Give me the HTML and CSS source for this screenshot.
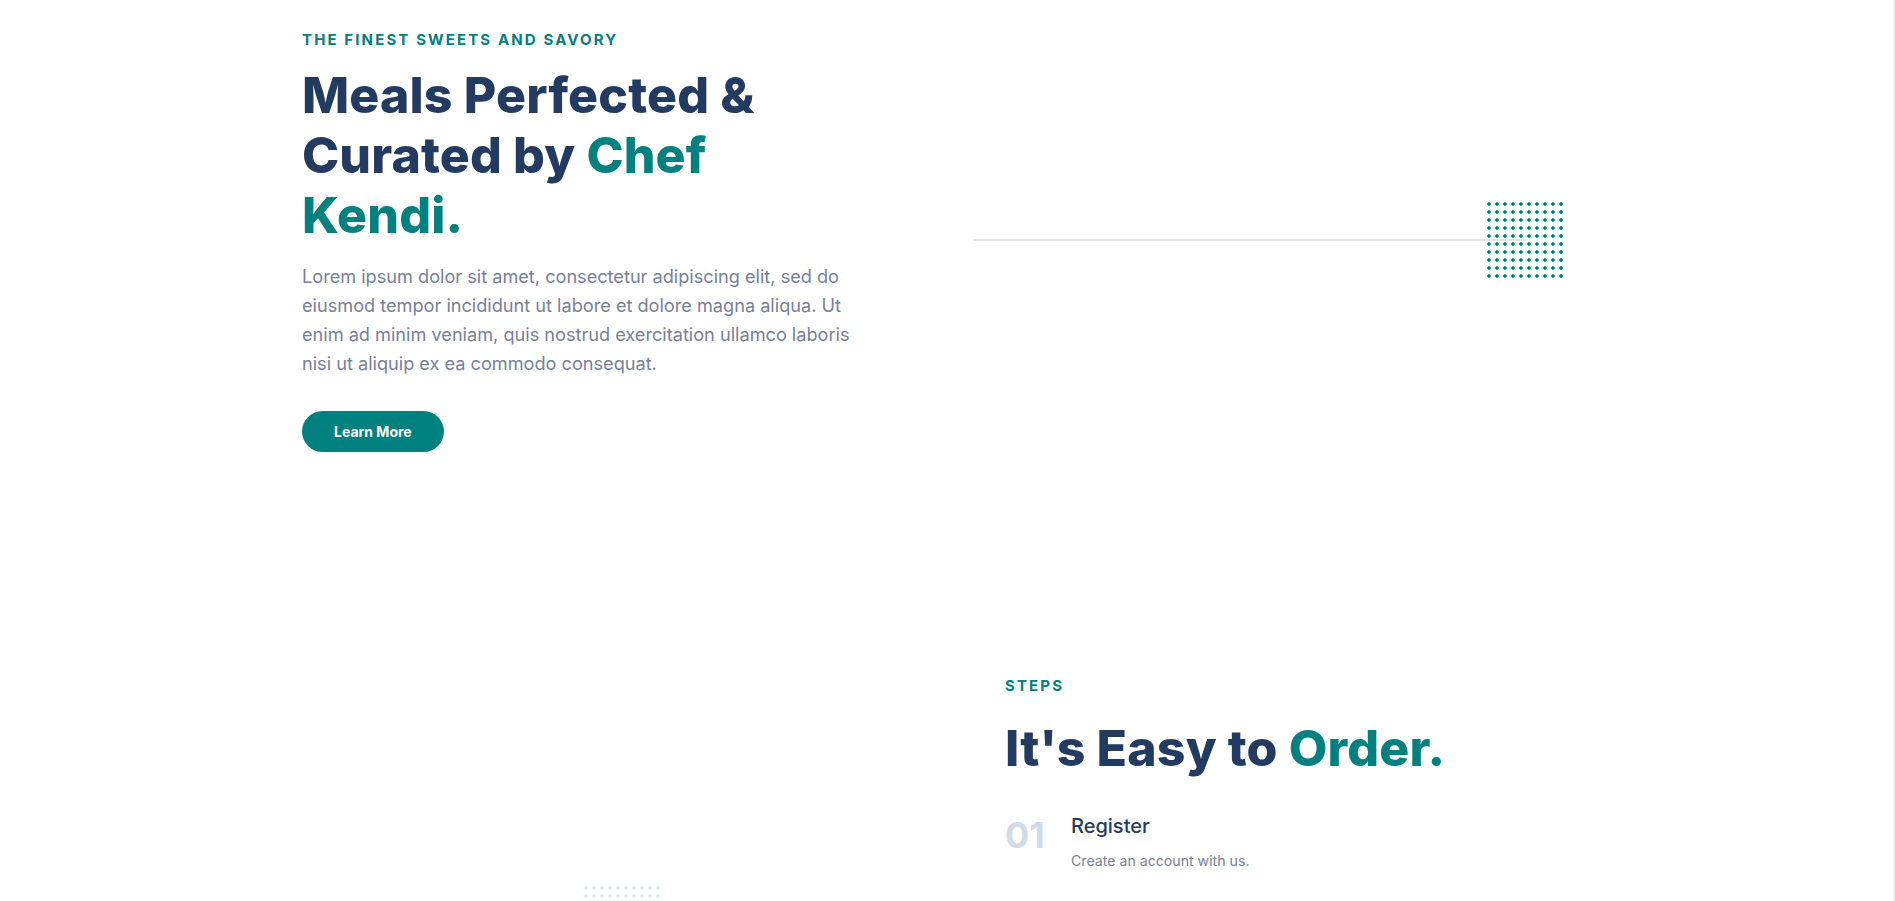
FILE: index.html
```html
<!DOCTYPE html>
<html lang="en">
<head>
<meta charset="utf-8">
<title>Chef Kendi</title>
<link rel="stylesheet" href="styles.css">
</head>
<body>
<div class="page">
  <section class="hero container">
    <div class="hero-text">
      <p class="eyebrow">THE FINEST SWEETS AND SAVORY</p>
      <h1 class="title">Meals Perfected &amp; Curated by <span class="accent">Chef Kendi.</span></h1>
      <p class="lead">Lorem ipsum dolor sit amet, consectetur adipiscing elit, sed do eiusmod tempor incididunt ut labore et dolore magna aliqua. Ut enim ad minim veniam, quis nostrud exercitation ullamco laboris nisi ut aliquip ex ea commodo consequat.</p>
      <a class="btn" href="#">Learn More</a>
    </div>
    <div class="hero-media">
      <div class="hero-art">
        <div class="hero-line"></div>
        <div class="dots dots-strong"></div>
      </div>
    </div>
  </section>

  <section class="steps container">
    <div class="steps-media">
      <div class="dots dots-soft"></div>
    </div>
    <div class="steps-text">
      <p class="eyebrow">STEPS</p>
      <h2 class="title title-steps">It's Easy to <span class="accent">Order.</span></h2>
      <div class="step">
        <div class="step-num">01</div>
        <div class="step-body">
          <h3 class="step-title">Register</h3>
          <p class="step-desc">Create an account with us.</p>
        </div>
      </div>
    </div>
  </section>
</div>
</body>
</html>
```

FILE: styles.css
```css
* { box-sizing: border-box; }

html, body {
  margin: 0;
  padding: 0;
  background: #ffffff;
}

body {
  font-family: Inter, "Noto Sans", sans-serif;
  overflow: hidden;
}

.page {
  min-height: 100vh;
  border-right: 2px solid #efefef;
}

.container {
  width: 1296px;
  margin: 0 auto;
  display: grid;
  grid-template-columns: 1fr 1fr;
  column-gap: 24px;
}

.eyebrow {
  margin: 0;
  font-size: 15px;
  line-height: 24px;
  font-weight: 700;
  letter-spacing: 2.12px;
  color: #00807f;
}

.title {
  margin: 0;
  font-size: 50px;
  line-height: 60px;
  font-weight: 800;
  letter-spacing: 0.15px;
  color: #243b61;
}

.accent { color: #00807f; }

/* HERO */
.hero {
  padding-top: 27.5px;
}

.hero-text {
  max-width: 564px;
  padding-left: 3.5px;
  display: flex;
  flex-direction: column;
  align-items: flex-start;
}

.hero-text .title {
  margin-top: 13px;
}

.lead {
  margin: 17px 0 0;
  font-size: 18.15px;
  line-height: 29px;
  color: #76809b;
}

.btn {
  margin-top: 33.5px;
  display: inline-flex;
  align-items: center;
  height: 41px;
  padding: 0 32px;
  border-radius: 21px;
  background: #00807f;
  color: #ffffff;
  font-size: 14px;
  font-weight: 700;
  text-decoration: none;
}

.hero-media {
  display: flex;
  align-items: center;
  padding-left: 14.5px;
}

.hero-art {
  position: relative;
  width: 592px;
  height: 80px;
  display: flex;
  align-items: center;
}

.hero-line {
  width: 553px;
  height: 2px;
  background: #e4e4ea;
}

.dots {
  width: 80px;
  height: 80px;
  background-size: 8px 8px;
}

.dots-strong {
  position: absolute;
  right: 0;
  top: 0;
  background-image: radial-gradient(circle at 4px 4px, #00807f 1.5px, transparent 1.9px);
}

/* STEPS */
.steps {
  margin-top: 222px;
}

.steps-media {
  position: relative;
}

.dots-soft {
  position: absolute;
  left: 283.5px;
  top: 210px;
  background-image: radial-gradient(circle at 4px 4px, #d6ecec 1.5px, transparent 1.9px);
}

.steps-text {
  padding-left: 46.5px;
}

.title-steps {
  margin-top: 20px;
}

.step {
  margin-top: 34px;
  display: flex;
  align-items: flex-start;
}

.step-num {
  flex: 0 0 66px;
  margin-top: 5px;
  font-size: 36px;
  line-height: 36px;
  font-weight: 700;
  color: #d0dbe7;
}

.step-title {
  margin: 0;
  font-size: 20px;
  line-height: 28px;
  font-weight: 500;
  color: #243b61;
}

.step-desc {
  margin: 10px 0 0;
  font-size: 14.15px;
  line-height: 22px;
  color: #76809b;
}
```
